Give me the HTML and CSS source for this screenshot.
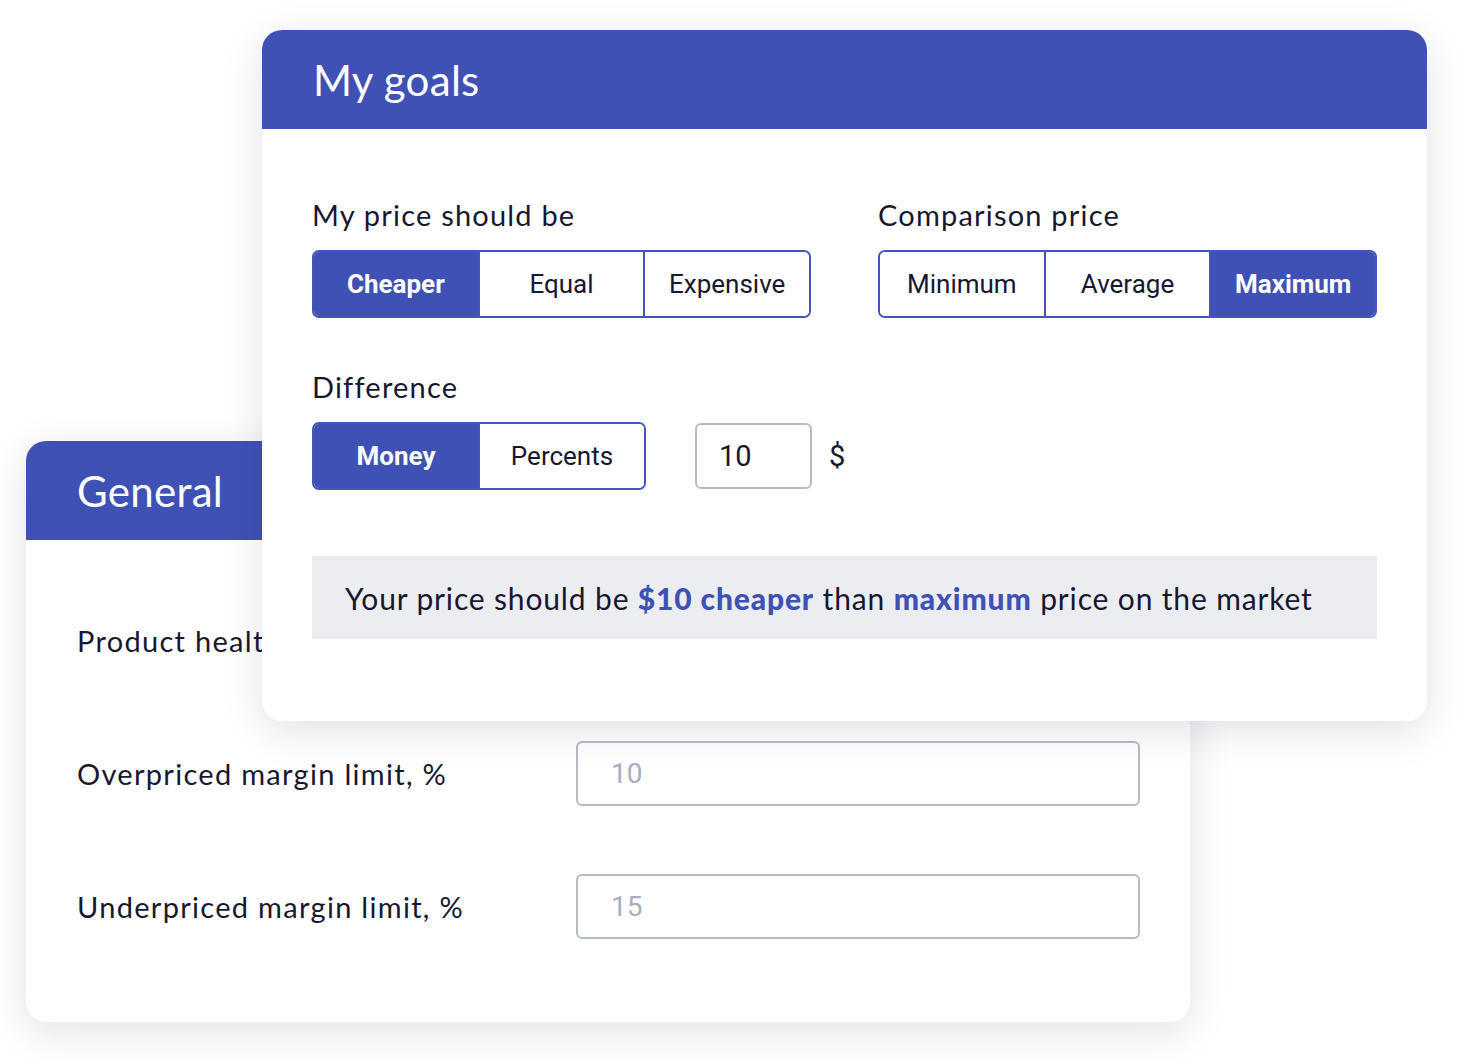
FILE: index.html
```html
<!DOCTYPE html>
<html lang="en">
<head>
<meta charset="utf-8">
<title>My goals</title>
<link rel="stylesheet" href="styles.css">
</head>
<body>
<div class="canvas">
  <section class="card card-general">
    <header class="card-head"><h2 class="card-title">General</h2></header>
    <div class="general-body">
      <div class="field-row">
        <span class="field-label">Product health</span>
        <div class="field-input"></div>
      </div>
      <div class="field-row">
        <span class="field-label">Overpriced margin limit, %</span>
        <div class="field-input">10</div>
      </div>
      <div class="field-row">
        <span class="field-label">Underpriced margin limit, %</span>
        <div class="field-input">15</div>
      </div>
    </div>
  </section>

  <section class="card card-goals">
    <header class="card-head"><h2 class="card-title">My goals</h2></header>
    <div class="goals-body">
      <div class="goals-grid">
        <div class="group">
          <div class="group-label">My price should be</div>
          <div class="segmented">
            <span class="seg active">Cheaper</span>
            <span class="seg">Equal</span>
            <span class="seg">Expensive</span>
          </div>
        </div>
        <div class="group">
          <div class="group-label">Comparison price</div>
          <div class="segmented">
            <span class="seg">Minimum</span>
            <span class="seg">Average</span>
            <span class="seg active">Maximum</span>
          </div>
        </div>
      </div>
      <div class="group diff">
        <div class="group-label">Difference</div>
        <div class="diff-row">
          <div class="segmented seg-two">
            <span class="seg active">Money</span>
            <span class="seg">Percents</span>
          </div>
          <div class="amount">10</div>
          <span class="currency">$</span>
        </div>
      </div>
      <div class="summary">Your price should be <strong>$10 cheaper</strong> than <strong>maximum</strong> price on the market</div>
    </div>
  </section>
</div>
</body>
</html>
```

FILE: styles.css
```css
* { box-sizing: border-box; }

html, body {
  margin: 0;
  padding: 0;
  background: #ffffff;
}

body {
  font-family: "Lato", "Noto Sans", sans-serif;
  color: #171731;
}

.canvas {
  position: relative;
  width: 1460px;
  height: 1060px;
  overflow: hidden;
}

.card {
  position: absolute;
  background: #ffffff;
  border-radius: 20px;
  overflow: hidden;
  box-shadow: 0 10px 40px rgba(30, 32, 70, 0.13);
}

.card-general {
  left: 26px;
  top: 441px;
  width: 1164px;
  height: 581px;
}

.card-goals {
  left: 262px;
  top: 30px;
  width: 1165px;
  height: 691px;
}

.card-head {
  height: 99px;
  background: #3f51b5;
  display: flex;
  align-items: center;
  padding-left: 51px;
}

.card-title {
  margin: 0;
  font-size: 42px;
  font-weight: 400;
  color: #ffffff;
  letter-spacing: 0.3px;
}

/* General card */
.general-body {
  padding: 68px 50px 0 51px;
  display: flex;
  flex-direction: column;
  gap: 68px;
}

.field-row {
  display: flex;
  align-items: center;
  height: 65px;
}

.field-label {
  width: 499px;
  flex: none;
  font-size: 29px;
  letter-spacing: 1.3px;
  color: #171731;
}

.field-input {
  width: 565px;
  height: 65px;
  border: 2px solid #b6b9c8;
  border-radius: 6px;
  display: flex;
  align-items: center;
  padding-left: 33px;
  font-family: "Roboto", sans-serif;
  font-size: 28px;
  color: #a9adc0;
}

/* Goals card */
.goals-body {
  padding: 69px 50px 0 50px;
}

.goals-grid {
  display: grid;
  grid-template-columns: 499px 499px;
  column-gap: 67px;
}

.group-label {
  font-size: 29px;
  line-height: 34px;
  margin-bottom: 18px;
  letter-spacing: 1.2px;
  color: #171731;
}

.segmented {
  display: flex;
  height: 68px;
  border: 2px solid #4454ba;
  border-radius: 7px;
  overflow: hidden;
}

.seg {
  flex: 1;
  display: flex;
  align-items: center;
  justify-content: center;
  font-family: "Roboto", sans-serif;
  font-size: 26px;
  color: #171731;
  background: #ffffff;
}

.seg + .seg {
  border-left: 2px solid #4454ba;
}

.seg.active {
  background: #3f51b5;
  color: #ffffff;
  font-weight: 700;
}

.diff {
  margin-top: 52px;
}

.diff-row {
  display: flex;
  align-items: center;
}

.seg-two {
  width: 334px;
}

.amount {
  margin-left: 49px;
  width: 117px;
  height: 66px;
  border: 2px solid #b6b9c8;
  border-radius: 6px;
  display: flex;
  align-items: center;
  padding-left: 22px;
  font-family: "Roboto", sans-serif;
  font-size: 29px;
  color: #171731;
}

.currency {
  margin-left: 17px;
  font-family: "Roboto", sans-serif;
  font-size: 29px;
  color: #171731;
}

.summary {
  margin-top: 66px;
  height: 83px;
  background: #ecedf1;
  display: flex;
  align-items: center;
  padding-left: 33px;
  font-size: 30px;
  letter-spacing: 0.85px;
  color: #171731;
  white-space: pre;
}

.summary strong {
  color: #3f51b5;
  font-weight: 900;
}
```
